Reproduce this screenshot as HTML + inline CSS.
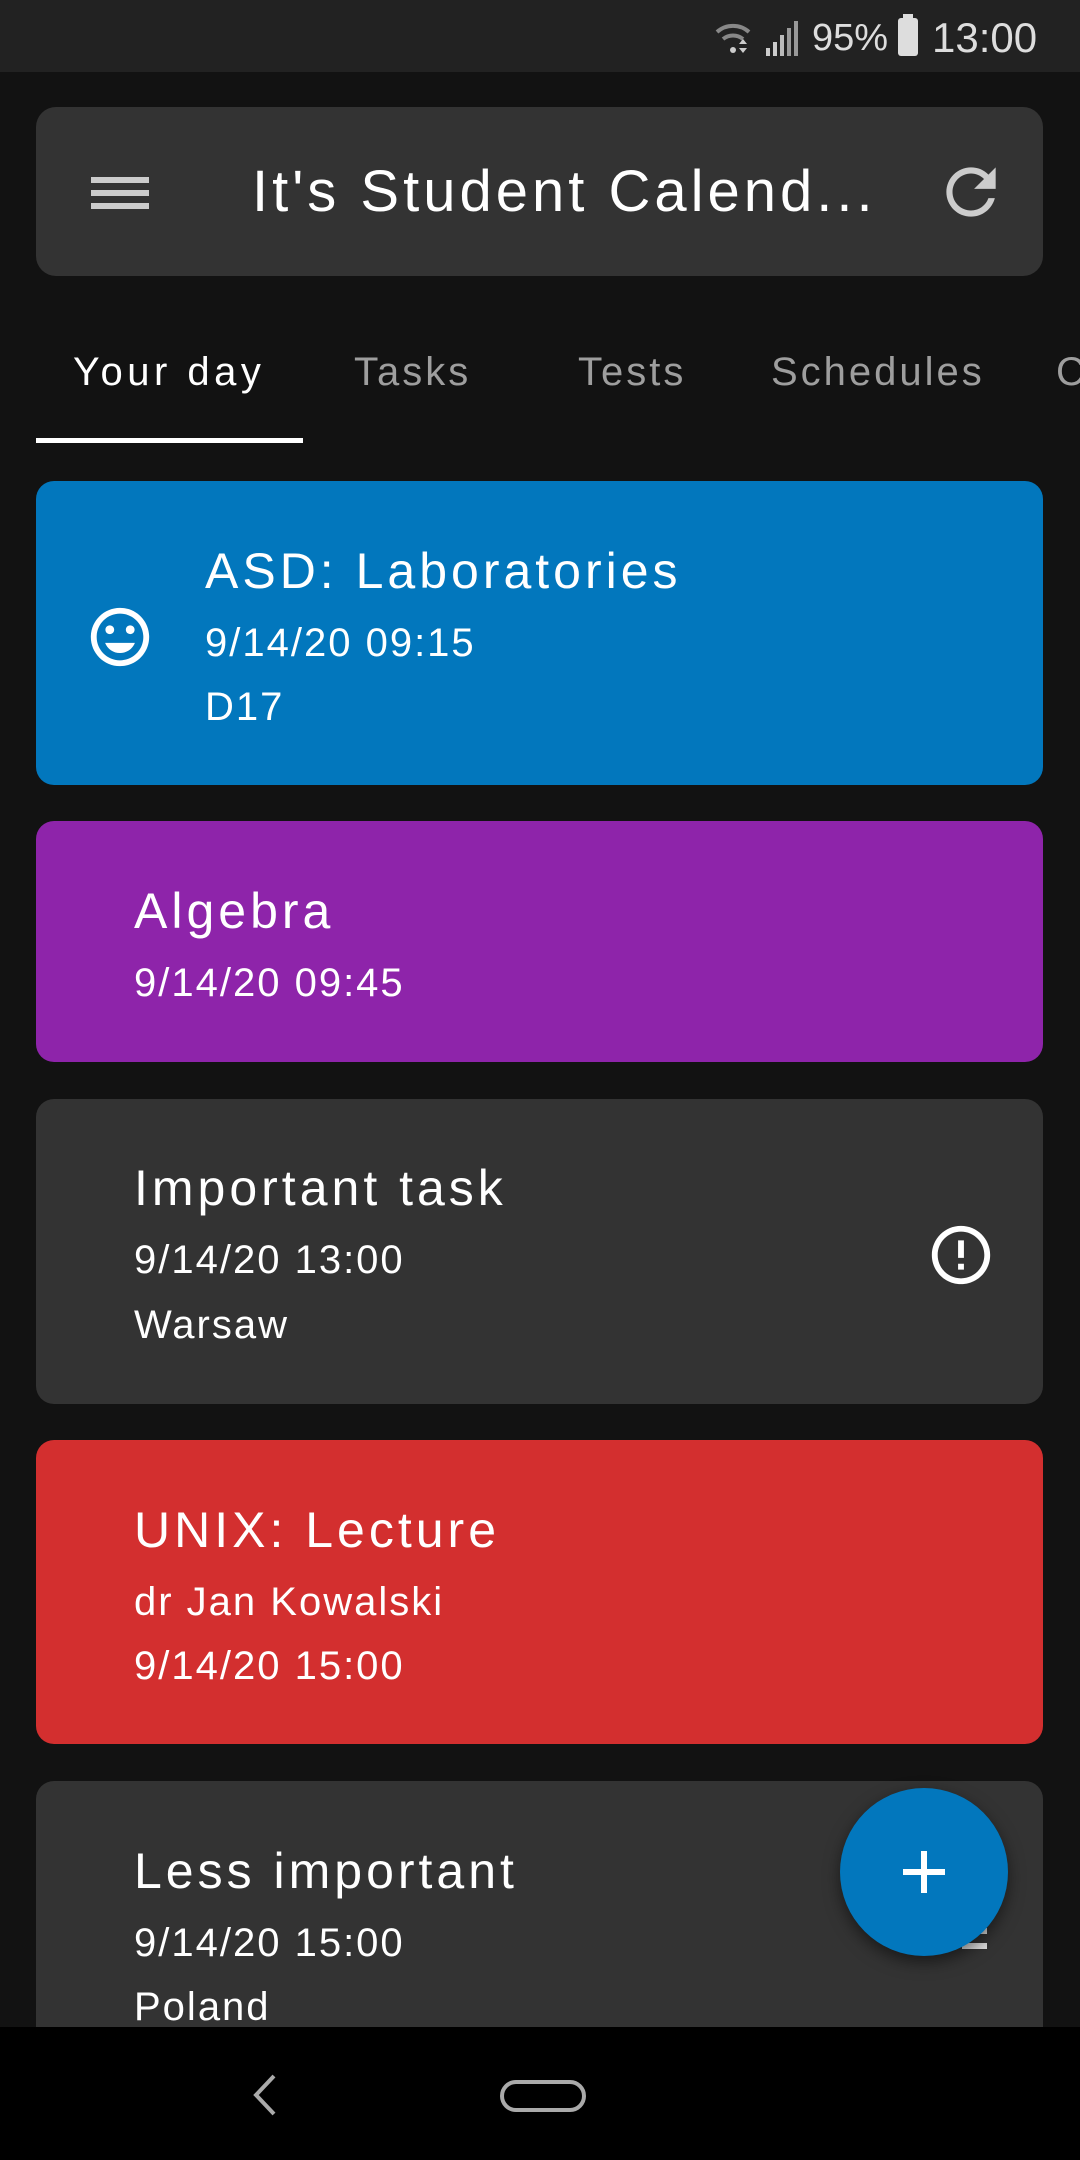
<!DOCTYPE html>
<html><head><meta charset="utf-8"><style>
*{margin:0;padding:0;box-sizing:border-box}
body{width:1080px;height:2160px;background:#121212;font-family:"Liberation Sans",sans-serif;color:#fff;position:relative;overflow:hidden}
.abs{position:absolute}
.status{left:0;top:0;width:1080px;height:72px;background:#222}
.bar{left:36px;top:107px;width:1007px;height:169px;background:#333;border-radius:20px}
.card{position:absolute;left:36px;width:1007px;border-radius:18px;overflow:hidden}
.t{position:absolute;white-space:nowrap;line-height:1}
.h{letter-spacing:4px}
.d{letter-spacing:2px}
.tab{position:absolute;top:352px;font-size:40px;color:#9e9e9e;line-height:1;letter-spacing:3px}
</style></head><body>
<div class="abs status">
 <svg class="abs" style="left:713px;top:18px" width="40" height="38" viewBox="0 0 40 38"><path d="M4 14 A24 24 0 0 1 36 14" stroke="#888" stroke-width="4" fill="none"/><path d="M10 21 A16 16 0 0 1 30 21" stroke="#888" stroke-width="4" fill="none"/><circle cx="20" cy="32" r="3" fill="#ccc"/><path d="M26 26 l4 -5 l4 5z M26 30 l4 5 l4 -5z" fill="#ccc"/></svg>
 <svg class="abs" style="left:764px;top:20px" width="40" height="36" viewBox="0 0 40 36"><rect x="2" y="28" width="4" height="8" fill="#ccc"/><rect x="9" y="22" width="4" height="14" fill="#ccc"/><rect x="16" y="15" width="4" height="21" fill="#bbb"/><rect x="23" y="8" width="4" height="28" fill="#999"/><rect x="30" y="1" width="4" height="35" fill="#999"/></svg>
 <div class="t" style="left:812px;top:19px;font-size:38px;color:#ddd">95%</div>
 <div class="abs" style="left:898px;top:18px;width:20px;height:38px;background:#ddd;border-radius:3px"></div>
 <div class="abs" style="left:903px;top:14px;width:10px;height:5px;background:#ddd"></div>
 <div class="t" style="left:932px;top:17px;font-size:42px;color:#ddd">13:00</div>
</div>
<div class="abs bar">
 <div class="abs" style="left:55px;top:70px;width:58px;height:6px;background:#ccc"></div>
 <div class="abs" style="left:55px;top:83px;width:58px;height:6px;background:#ccc"></div>
 <div class="abs" style="left:55px;top:96px;width:58px;height:6px;background:#ccc"></div>
 <div class="t" style="left:216px;top:56px;font-size:58px;color:#fff;letter-spacing:4px">It's Student Calend...</div>
 <svg class="abs" style="left:898px;top:48px" width="74" height="74" viewBox="0 0 24 24"><path d="M17.65 6.35A7.958 7.958 0 0 0 12 4c-4.42 0-7.99 3.58-7.99 8s3.57 8 7.99 8c3.73 0 6.84-2.55 7.73-6h-2.08A5.99 5.99 0 0 1 12 18c-3.31 0-6-2.69-6-6s2.69-6 6-6c1.66 0 3.140.69 4.22 1.78L13 11h7V4l-2.35 2.35z" fill="#ccc"/></svg>
</div>
<div class="tab" style="left:73px;color:#fff;letter-spacing:4.5px">Your day</div>
<div class="tab" style="left:354px">Tasks</div>
<div class="tab" style="left:578px">Tests</div>
<div class="tab" style="left:771px">Schedules</div>
<div class="tab" style="left:1056px">C</div>
<div class="abs" style="left:36px;top:438px;width:267px;height:5px;background:#fff"></div>

<div class="card" style="top:481px;height:304px;background:#0277bd">
 <svg class="abs" style="left:49px;top:121px" width="70" height="70" viewBox="0 0 24 24"><path d="M11.99 2C6.47 2 2 6.48 2 12s4.47 10 9.99 10C17.52 22 22 17.520 22 12S17.52 2 11.99 2zM12 20c-4.42 0-8-3.58-8-8s3.58-8 8-8 8 3.58 8 8-3.58 8-8 8zm3.5-9c.83 0 1.5-.67 1.5-1.5S16.33 8 15.5 8 14 8.67 14 9.5s.67 1.5 1.5 1.5zm-7 0c.83 0 1.5-.67 1.5-1.5S9.33 8 8.5 8 7 8.67 7 9.5 7.67 11 8.5 11zm3.5 6.5c2.33 0 4.31-1.46 5.11-3.5H6.89c.8 2.04 2.78 3.5 5.11 3.5z" fill="#fff"/></svg>
 <div class="t h" style="left:169px;top:65px;font-size:50px">ASD: Laboratories</div>
 <div class="t d" style="left:169px;top:142px;font-size:40px">9/14/20 09:15</div>
 <div class="t d" style="left:169px;top:206px;font-size:40px">D17</div>
</div>
<div class="card" style="top:821px;height:241px;background:#8e24aa">
 <div class="t h" style="left:98px;top:65px;font-size:50px">Algebra</div>
 <div class="t d" style="left:98px;top:142px;font-size:40px">9/14/20 09:45</div>
</div>
<div class="card" style="top:1099px;height:305px;background:#333">
 <div class="t h" style="left:98px;top:64px;font-size:50px">Important task</div>
 <div class="t d" style="left:98px;top:141px;font-size:40px">9/14/20 13:00</div>
 <div class="t d" style="left:98px;top:206px;font-size:40px">Warsaw</div>
 <svg class="abs" style="left:890px;top:121px" width="70" height="70" viewBox="0 0 24 24"><path d="M11 15h2v2h-2zm0-8h2v6h-2zm.99-5C6.47 2 2 6.48 2 12s4.47 10 9.99 10C17.52 22 22 17.52 22 12S17.52 2 11.99 2zM12 20c-4.42 0-8-3.58-8-8s3.58-8 8-8 8 3.58 8 8-3.58 8-8 8z" fill="#fff"/></svg>
</div>
<div class="card" style="top:1440px;height:304px;background:#d32f2f">
 <div class="t h" style="left:98px;top:65px;font-size:50px">UNIX: Lecture</div>
 <div class="t d" style="left:98px;top:142px;font-size:40px">dr Jan Kowalski</div>
 <div class="t d" style="left:98px;top:206px;font-size:40px">9/14/20 15:00</div>
</div>
<div class="card" style="top:1781px;height:250px;background:#333;border-radius:18px 18px 0 0">
 <div class="t h" style="left:98px;top:65px;font-size:50px">Less important</div>
 <div class="t d" style="left:98px;top:142px;font-size:40px">9/14/20 15:00</div>
 <div class="t d" style="left:98px;top:206px;font-size:40px">Poland</div>
 <div class="abs" style="left:926px;top:147px;width:25px;height:6px;background:#ddd"></div>
 <div class="abs" style="left:926px;top:162px;width:25px;height:6px;background:#ddd"></div>
</div>
<div class="abs" style="left:840px;top:1788px;width:168px;height:168px;border-radius:50%;background:#0277bd;box-shadow:0 6px 16px rgba(0,0,0,.5)">
 <div class="abs" style="left:63px;top:81px;width:42px;height:6px;background:#fff"></div>
 <div class="abs" style="left:81px;top:63px;width:6px;height:42px;background:#fff"></div>
</div>
<div class="abs" style="left:0;top:2027px;width:1080px;height:133px;background:#000">
 <svg class="abs" style="left:248px;top:45px" width="34" height="46" viewBox="0 0 34 46"><path d="M26 4 L8 23 L26 42" stroke="#aaa" stroke-width="4" fill="none"/></svg>
 <div class="abs" style="left:500px;top:53px;width:86px;height:32px;border:4px solid #aaa;border-radius:16px"></div>
</div>
</body></html>
